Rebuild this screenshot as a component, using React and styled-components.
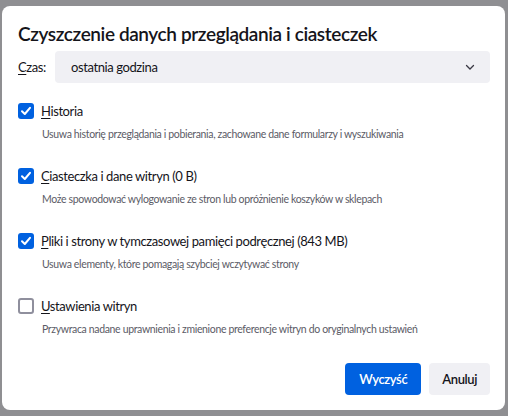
import React from "react"
import styled, { createGlobalStyle, css } from "styled-components"

const GlobalStyle = createGlobalStyle`
  html, body {
    margin: 0;
    padding: 0;
    background: #8f8f92;
  }
  body {
    font-family: Lato, "Noto Sans", sans-serif;
    color: #15141a;
  }
`

const bodyText = css`
  font-size: 13px;
  letter-spacing: -0.4px;
`

const Page = styled.div`
  padding: 6px 3px 6px 2px;
`

const Dialog = styled.div`
  box-sizing: border-box;
  width: 503px;
  height: 404px;
  background: #fff;
  border-radius: 8px;
  padding: 16px 15px 15px 16px;
  display: flex;
  flex-direction: column;
`

const Title = styled.h1`
  margin: 0;
  font-size: 19px;
  letter-spacing: -0.4px;
  line-height: 24px;
  font-weight: 600;
  color: #15141a;
`

const TimeRow = styled.div`
  display: flex;
  align-items: center;
  margin-top: 5px;
`

const Label = styled.span`
  ${bodyText}
  width: 37px;
`

const Key = styled.span`
  text-decoration: underline;
  text-underline-offset: 2px;
`

const Select = styled.div`
  ${bodyText}
  flex: 1;
  height: 32px;
  background: #f0f0f4;
  border-radius: 4px;
  display: flex;
  align-items: center;
  justify-content: space-between;
  padding: 0 14px 0 16px;
`

const List = styled.div`
  display: flex;
  flex-direction: column;
  gap: 24px;
  margin-top: 18px;
`

const Item = styled.div`
  display: flex;
  flex-direction: column;
`

const CheckRow = styled.label`
  ${bodyText}
  display: flex;
  align-items: center;
  height: 20px;
  gap: 7px;
`

const Box = styled.span`
  box-sizing: border-box;
  width: 16px;
  height: 16px;
  border-radius: 3px;
  display: flex;
  align-items: center;
  justify-content: center;
  background: ${p => (p.$checked ? "#0061e0" : "#fff")};
  border: ${p => (p.$checked ? "none" : "2px solid #8f8f9d")};
`

const Desc = styled.div`
  margin-top: 5px;
  margin-left: 24px;
  font-size: 10.5px;
  letter-spacing: -0.35px;
  line-height: 16px;
  color: #5b5b66;
`

const Footer = styled.div`
  margin-top: auto;
  display: flex;
  justify-content: flex-end;
  gap: 8px;
`

const Button = styled.button`
  ${bodyText}
  height: 32px;
  border: none;
  border-radius: 4px;
  padding: 0 ${p => (p.$primary ? "14px" : "13px")};
  font-family: inherit;
  font-weight: 600;
  background: ${p => (p.$primary ? "#0061e0" : "#f0f0f4")};
  color: ${p => (p.$primary ? "#fff" : "#15141a")};
`

const Check = () => (
  <svg width="12" height="12" viewBox="0 0 12 12">
    <path d="M2 6.3 L4.8 9 L10 2.8" fill="none" stroke="#fff" strokeWidth="2" strokeLinecap="round" strokeLinejoin="round" />
  </svg>
)

const items = [
  { key: "H", rest: "istoria", checked: true, desc: "Usuwa historię przeglądania i pobierania, zachowane dane formularzy i wyszukiwania" },
  { key: "C", rest: "iasteczka i dane witryn (0 B)", checked: true, desc: "Może spowodować wylogowanie ze stron lub opróżnienie koszyków w sklepach" },
  { key: "P", rest: "liki i strony w tymczasowej pamięci podręcznej (843 MB)", checked: true, desc: "Usuwa elementy, które pomagają szybciej wczytywać strony" },
  { key: "U", rest: "stawienia witryn", checked: false, desc: "Przywraca nadane uprawnienia i zmienione preferencje witryn do oryginalnych ustawień" },
]

export default function App() {
  return (
    <Page>
      <GlobalStyle />
      <Dialog>
        <Title>Czyszczenie danych przeglądania i ciasteczek</Title>
        <TimeRow>
          <Label><Key>C</Key>zas:</Label>
          <Select>
            ostatnia godzina
            <svg width="12" height="12" viewBox="0 0 12 12">
              <path d="M2.5 4.5 L6 8 L9.5 4.5" fill="none" stroke="#3a3944" strokeWidth="1.3" strokeLinecap="round" />
            </svg>
          </Select>
        </TimeRow>
        <List>
          {items.map(it => (
            <Item key={it.key}>
              <CheckRow>
                <Box $checked={it.checked}>{it.checked && <Check />}</Box>
                <span><Key>{it.key}</Key>{it.rest}</span>
              </CheckRow>
              <Desc>{it.desc}</Desc>
            </Item>
          ))}
        </List>
        <Footer>
          <Button $primary>Wyczyść</Button>
          <Button>Anuluj</Button>
        </Footer>
      </Dialog>
    </Page>
  )
}
